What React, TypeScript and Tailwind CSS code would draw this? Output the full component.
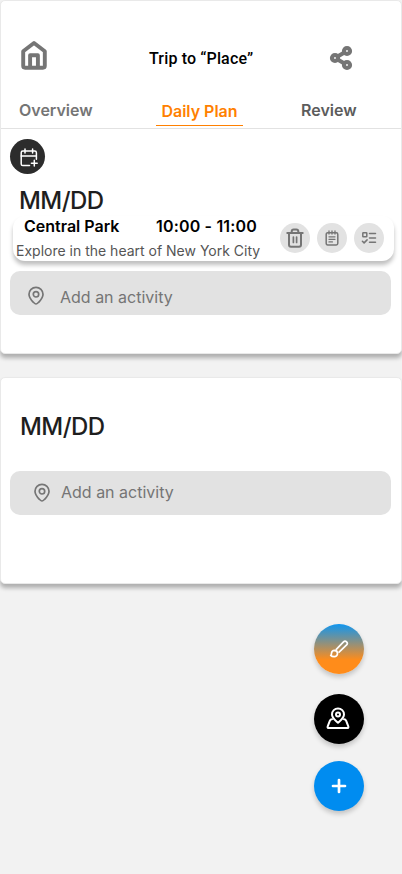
import type { ReactNode } from "react";

const stroke = {
  fill: "none",
  stroke: "currentColor",
  strokeLinecap: "round",
  strokeLinejoin: "round",
} as const;

function HomeIcon() {
  return (
    <svg width="28" height="32" viewBox="0 0 28 32" {...stroke} strokeWidth="3.9">
      <path d="M3.200 12.200 14 4l10.800 8.200v14.600q0 1.900-1.900 1.900H5.100q-1.900 0-1.900-1.900z" />
      <path d="M10.100 28.200V16.200h7.800v12" strokeLinecap="butt" />
    </svg>
  );
}

function ShareIcon() {
  return (
    <svg width="24" height="26" viewBox="0 0 24 26" {...stroke} strokeWidth="4.200">
      <circle cx="6" cy="13" r="3" />
      <circle cx="18" cy="6" r="3" />
      <circle cx="18" cy="20" r="3" />
      <path d="m9 11.300 6-3.500M9 14.700l6 3.500" />
    </svg>
  );
}

function CalendarPlusIcon() {
  return (
    <svg width="20" height="20" viewBox="0 0 20 20" {...stroke} strokeWidth="1.500">
      <path d="M10.500 17.500H3.800q-1.600 0-1.600-1.600V4.700q0-1.600 1.600-1.600h12q1.600 0 1.600 1.600v6.600" />
      <path d="M2.200 8h15.200M6 1v4M13.600 1v4M15.300 12.300v5.800M12.400 15.200h5.800" />
    </svg>
  );
}

function PinIcon() {
  return (
    <svg width="18" height="20" viewBox="0 0 18 20" {...stroke} strokeWidth="1.700">
      <path d="M9 18c-1 0-1.700-.8-2.600-1.700C4.200 14.100 2 11.700 2 8.300a7 7 0 0 1 14 0c0 3.400-2.200 5.800-4.400 8-.9.900-1.600 1.700-2.600 1.700z" />
      <circle cx="9" cy="8.300" r="2.700" />
    </svg>
  );
}

function TrashIcon() {
  return (
    <svg width="18" height="20" viewBox="0 0 18 20" {...stroke} strokeWidth="2">
      <path d="M1.300 5h15.400M3 5v11.700q0 2 2 2h8q2 0 2-2V5M5.700 5V3.500q0-2 2-2h2.600q2 0 2 2V5" />
      <path d="M7.400 9v5.500M10.600 9v5.500" strokeWidth="1.700" />
    </svg>
  );
}

function NotesIcon() {
  return (
    <svg width="14" height="16" viewBox="0 0 14 16" {...stroke} strokeWidth="1.500">
      <path d="M2.700 2.700h8.600q1.500 0 1.500 1.700v8.900q0 1.700-1.500 1.700H2.700Q1.200 15 1.200 13.300V4.400q0-1.700 1.500-1.700z" />
      <path d="M4 1v3M7 1v3M10 1v3M4 6.800h6M4 9.300h6M4 11.900h3.400" strokeWidth="1.300" />
    </svg>
  );
}

function ChecklistIcon() {
  return (
    <svg width="16" height="14" viewBox="0 0 16 14" {...stroke} strokeWidth="1.500">
      <rect x="1.800" y="1.700" width="4" height="4" rx=".5" />
      <path d="m1.400 10.200 1.700 1.700 3-3M8.500 2.500h6M8.500 7h6M8.500 11.300h6" />
    </svg>
  );
}

function BrushIcon() {
  return (
    <svg width="20" height="20" viewBox="0 0 20 20" {...stroke} strokeWidth="1.700">
      <path d="m7.300 10.300 7.200-7.400a2.150 2.150 0 0 1 3.100 3l-7.500 7.300" />
      <path d="M5.400 11.300a3.200 3.200 0 1 1-.2 6.400c-1.500 0-2.700-.4-3.500-1.300 1-.5.7-1.300.8-2.300.2-1.600 1.300-2.800 2.900-2.800z" />
    </svg>
  );
}

function MapPinIcon() {
  return (
    <svg width="24" height="24" viewBox="0 0 24 24" {...stroke} strokeWidth="2">
      <path d="M12 15.800C9.300 13.200 6 11 6 7.400a6 6 0 0 1 12 0c0 3.600-3.300 5.800-6 8.400z" />
      <circle cx="12" cy="7.600" r="2" />
      <path d="M6 12.300q-1.600 0-2.200 1.500l-2.100 5.500q-.6 1.700 1.200 1.700h18.200q1.800 0 1.200-1.700l-2.100-5.500q-.6-1.500-2.200-1.500" />
    </svg>
  );
}

function PlusIcon() {
  return (
    <svg width="20" height="20" viewBox="0 0 20 20" {...stroke} strokeWidth="2.700">
      <path d="M10 4v12M4 10h12" />
    </svg>
  );
}

function RoundButton({ label, children }: { label: string; children: ReactNode }) {
  return (
    <button aria-label={label} className="flex size-[30px] items-center justify-center rounded-full bg-[#e2e2e2] text-[#757575]">
      {children}
    </button>
  );
}

function Fab({ label, className, children }: { label: string; className: string; children: ReactNode }) {
  return (
    <button
      aria-label={label}
      className={`flex size-[50px] items-center justify-center rounded-full text-white shadow-[0_3px_5px_rgba(0,0,0,0.2)] ${className}`}
    >
      {children}
    </button>
  );
}

const card = "rounded-[5px] border border-[#e9e9e9] bg-white shadow-[0_4px_4px_rgba(0,0,0,0.28)]";

export default function App() {
  return (
    <div className="h-[874px] w-[402px] overflow-hidden bg-[#f2f2f2] font-['Inter',sans-serif]">
      <main className={`h-[354px] w-[402px] ${card}`}>
        <header className="flex h-[128px] flex-col border-b border-[#e2e2e2]">
          <div className="mt-[37px] flex h-[40px] items-center pl-[19px] pr-[48px] text-[#757575]">
            <button aria-label="Home" className="-mt-1.5"><HomeIcon /></button>
            <h1 className="ml-[101px] w-[106px] whitespace-nowrap pt-0.5 font-['Roboto',sans-serif] text-base font-medium tracking-[0.15px] text-black">
              Trip to “Place”
            </h1>
            <button aria-label="Share" className="ml-auto"><ShareIcon /></button>
          </div>
          <nav className="mt-[22px] flex h-[26px] items-start text-base font-[560] leading-5 text-[#757575]">
            <a className="ml-[18px] w-[137px]">Overview</a>
            <a className="h-[26px] w-[87px] border-b border-[#ff8000] pt-px text-center text-[#ff8000]">Daily Plan</a>
            <a className="ml-[58px] text-[#5c5c5c]">Review</a>
          </nav>
        </header>

        <section className="flex flex-col pt-[10px]">
          <button aria-label="Add date" className="ml-[9px] flex size-[35px] items-center justify-center rounded-full bg-[#2c2c2c] pl-0.5 pt-0.5 text-white">
            <CalendarPlusIcon />
          </button>
          <h2 className="ml-[18px] mt-[12px] h-[30px] text-2xl font-[550] leading-[30px] tracking-[-0.55px] text-[#1e1e1e]">MM/DD</h2>
          <article className="ml-[12px] flex h-[45px] w-[381px] rounded-xl bg-white shadow-[0_4px_4px_rgba(0,0,0,0.25)]">
            <div className="w-[267px] shrink-0 whitespace-nowrap">
              <div className="flex pl-[11px] text-base font-semibold leading-5 text-black">
                <span className="w-[132px]">Central Park</span>
                <span className="tracking-[0.17px]">10:00 - 11:00</span>
              </div>
              <p className="pl-[3px] pt-[5px] text-sm leading-5 text-[#555]">Explore in the heart of New York City</p>
            </div>
            <div className="flex gap-[7px] pt-[7px]">
              <RoundButton label="Delete"><TrashIcon /></RoundButton>
              <RoundButton label="Notes"><NotesIcon /></RoundButton>
              <RoundButton label="Checklist"><ChecklistIcon /></RoundButton>
            </div>
          </article>
          <div className="ml-[9px] mt-[10px] flex h-[44px] w-[381px] items-center rounded-[10px] bg-[#e2e2e2] pl-[17px] text-base text-[#757575]">
            <span className="flex pt-[6px]"><PinIcon /></span>
            <span className="ml-[15px] pt-[7px]">Add an activity</span>
          </div>
        </section>
      </main>

      <section className={`mt-[23px] flex h-[207px] w-[402px] flex-col ${card}`}>
        <h2 className="ml-[19px] mt-[34px] text-2xl font-[550] leading-[30px] tracking-[-0.55px] text-[#1e1e1e]">MM/DD</h2>
        <div className="ml-[9px] mt-[29px] flex h-[44px] w-[381px] items-center rounded-[10px] bg-[#e2e2e2] pl-[23px] text-base text-[#757575]">
          <span className="flex pb-px"><PinIcon /></span>
          <span className="ml-[10px] pb-0.5">Add an activity</span>
        </div>
      </section>

      <div className="ml-[314px] mt-[40px] flex w-[50px] flex-col">
        <Fab label="Customize" className="bg-[linear-gradient(180deg,#1096f0_0%,#ff8c1a_72%)]"><BrushIcon /></Fab>
        <Fab label="Map" className="mt-[20px] bg-black pr-0.5"><MapPinIcon /></Fab>
        <Fab label="Add" className="mt-[17px] bg-[#008cf0]"><PlusIcon /></Fab>
      </div>
    </div>
  );
}
